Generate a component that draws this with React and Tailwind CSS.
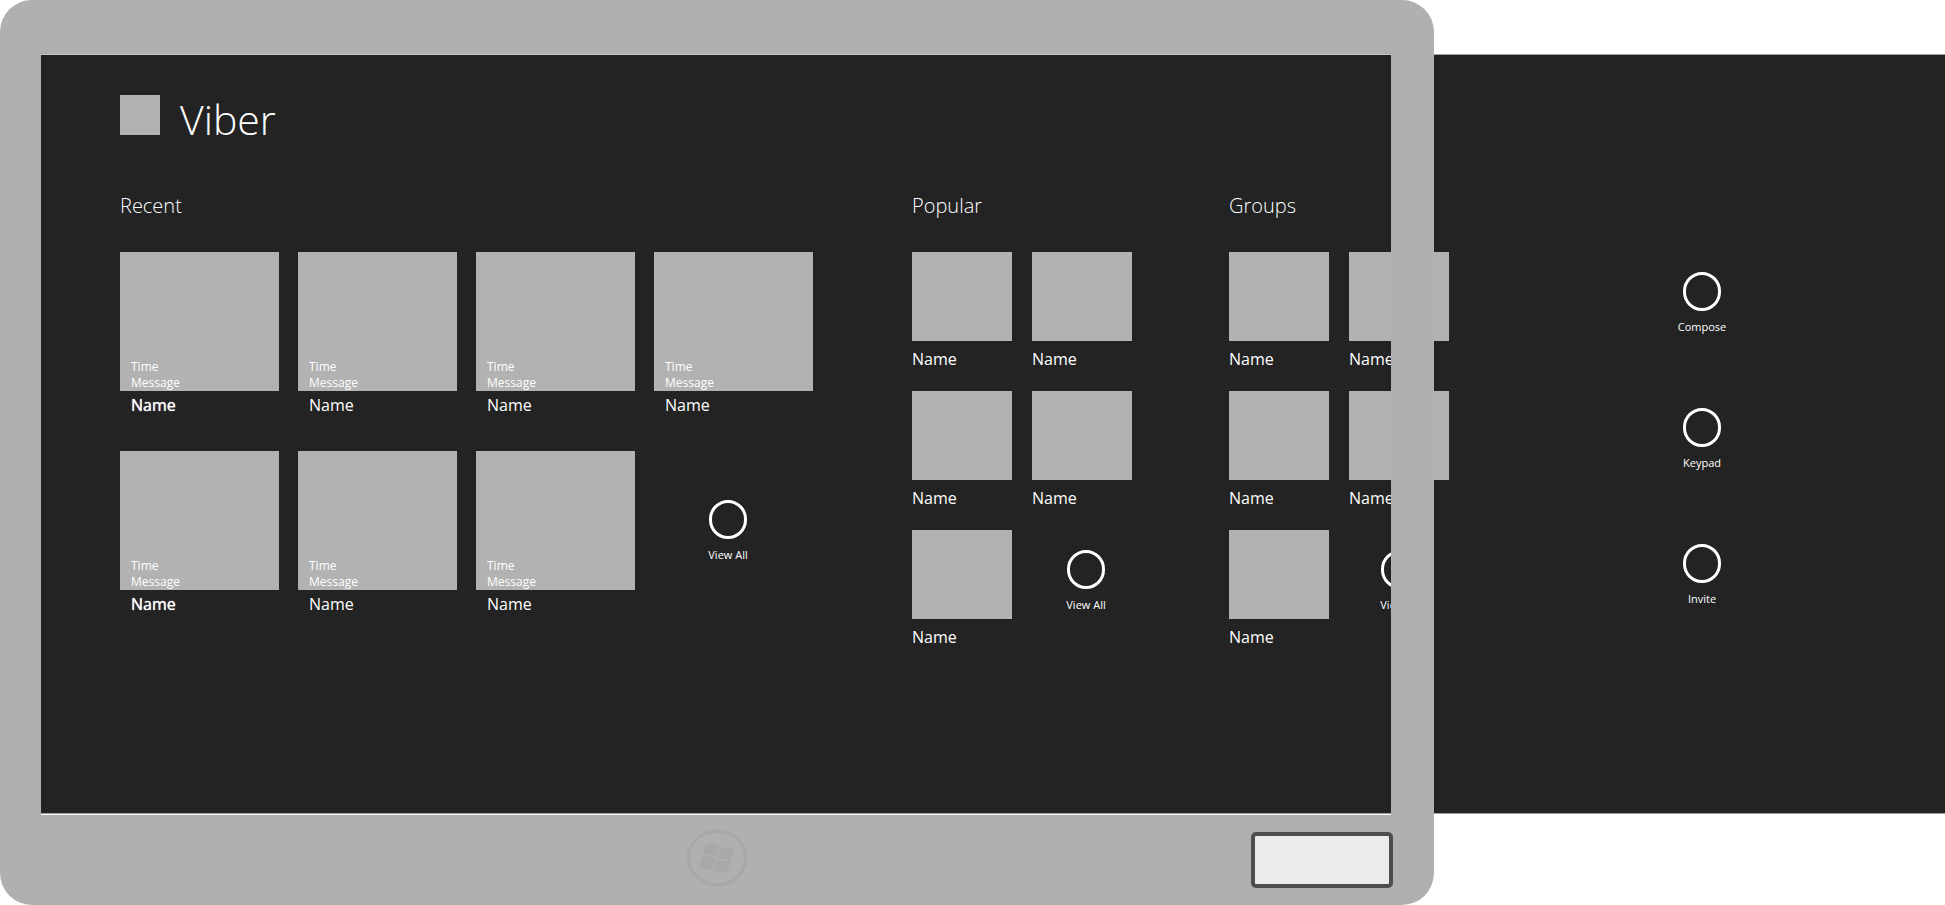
import React from 'react';

const recentChats = [1, 2, 3, 4, 5, 6, 7];
const contacts = [1, 2, 3, 4, 5];
const actions = ['Compose', 'Keypad', 'Invite'];

const RoundButton = ({ label, className = '' }) => (
  <button type="button" className={`flex w-[38px] flex-col items-center gap-2 ${className}`}>
    <span className="h-[39px] w-[38px] shrink-0 rounded-full border-[3px] border-white" />
    <span className="text-[11px] leading-4 font-normal whitespace-nowrap">{label}</span>
  </button>
);

const SectionTitle = ({ children }) => (
  <h2 className="mb-8 text-[20px] leading-7 font-light">{children}</h2>
);

const ChatTile = ({ highlighted }) => (
  <article className="h-[199px]">
    <div className="flex h-[139px] flex-col justify-end bg-[#b2b2b2] pl-[11px] text-[12px] leading-4 font-normal">
      <p>Time</p>
      <p>Message</p>
    </div>
    <h3 className={`pl-[11px] text-[16px] leading-7 font-normal ${highlighted ? '[text-shadow:0_0_1px_white]' : ''}`}>Name</h3>
  </article>
);

const ContactTile = () => (
  <article className="h-[139px]">
    <div className="h-[89px] bg-[#b2b2b2]" />
    <h3 className="mt-1 text-[16px] leading-7 font-normal">Name</h3>
  </article>
);

const ContactSection = ({ title, viewAllClass }) => (
  <section className="shrink-0">
    <SectionTitle>{title}</SectionTitle>
    <div className="grid grid-cols-[100px_100px] gap-x-5">
      {contacts.map((id) => (
        <ContactTile key={id} />
      ))}
      <RoundButton label="View All" className={`mt-5 self-start ${viewAllClass}`} />
    </div>
  </section>
);

const WindowsLogo = () => (
  <svg viewBox="0 0 62 58" className="h-[58px] w-[62px]" aria-hidden="true">
    <ellipse cx="31" cy="29" rx="28.8" ry="26.8" fill="none" stroke="#a7a8aa" strokeWidth="3.4" />
    <g fill="#a7a8aa">
      <path d="M19.8 16 C24 13.8 28.5 13.8 33.2 16.4 L29.8 28 C25.5 25.4 21 25.4 16.5 27.2 Z" />
      <path d="M34.6 17.4 C39 20 43.5 20 48.5 18 L45.3 29.2 C40.5 31.2 35.8 31.2 31.2 28.8 Z" />
      <path d="M16 28.8 C20.5 26.8 25 26.8 29.3 29.4 L26 41.4 C21.5 38.6 17.5 38.6 13.2 40.4 Z" />
      <path d="M30.8 30.4 C35.4 32.8 40 32.8 44.8 31 L41.4 42.4 C37 44.4 32.2 44.4 27.6 41.8 Z" />
    </g>
  </svg>
);

const DeviceFrame = () => (
  <div className="pointer-events-none absolute inset-y-0 right-[511px] left-0 flex flex-col overflow-hidden rounded-[32px]">
    <div className="h-[54px] bg-[#afb0b2]" />
    <div className="flex-1 border-r-[43px] border-l-[41px] border-[#afb0b2]">
      <div className="h-px bg-[#c4c4c5]" />
    </div>
    <div className="bg-[#afb0b2] pr-[43px] pl-[41px]">
      <div className="h-0.5 border-t border-[#a0a0a1] bg-[#f4f4f4]" />
    </div>
    <div className="grid h-[90px] grid-cols-3 items-center bg-[#afb0b2] pr-[41px] pl-[41px]">
      <div className="col-start-2 flex justify-center pb-1">
        <WindowsLogo />
      </div>
      <button
        type="button"
        aria-label="Device button"
        className="pointer-events-auto h-[56px] w-[142px] justify-self-end rounded-[5px] border-4 border-[#4d4f4e] bg-[#ebebeb]"
      />
    </div>
  </div>
);

const App = () => {
  return (
    <div className="relative flex min-h-screen flex-col overflow-hidden bg-white pt-[54px] pb-[91px] font-['Open_Sans','Noto_Sans',sans-serif] text-white">
      <main className="ml-[41px] flex-1 border-y border-[#a0a0a1] bg-[#232323] pt-10 pl-[79px]">
        <header className="flex items-start gap-5">
          <div className="h-10 w-10 bg-[#b2b2b2]" />
          <h1 className="text-[41px] leading-[48px] font-light">Viber</h1>
        </header>

        <div className="mt-[49px] flex items-start">
          <section className="mr-[99px] shrink-0">
            <SectionTitle>Recent</SectionTitle>
            <div className="grid grid-cols-[repeat(4,159px)] gap-x-[19px]">
              {recentChats.map((id, index) => (
                <ChatTile key={id} highlighted={index % 4 === 0} />
              ))}
              <RoundButton label="View All" className="mt-[49px] ml-[55px] self-start" />
            </div>
          </section>

          <div className="flex shrink-0 gap-[97px]">
            <ContactSection title="Popular" viewAllClass="ml-[35px]" />
            <ContactSection title="Groups" viewAllClass="ml-[32px]" />
          </div>

          <nav className="mt-20 mr-[224px] ml-auto flex flex-col gap-[73px]">
            {actions.map((action) => (
              <RoundButton key={action} label={action} />
            ))}
          </nav>
        </div>
      </main>

      <DeviceFrame />
    </div>
  );
};

export default App;
